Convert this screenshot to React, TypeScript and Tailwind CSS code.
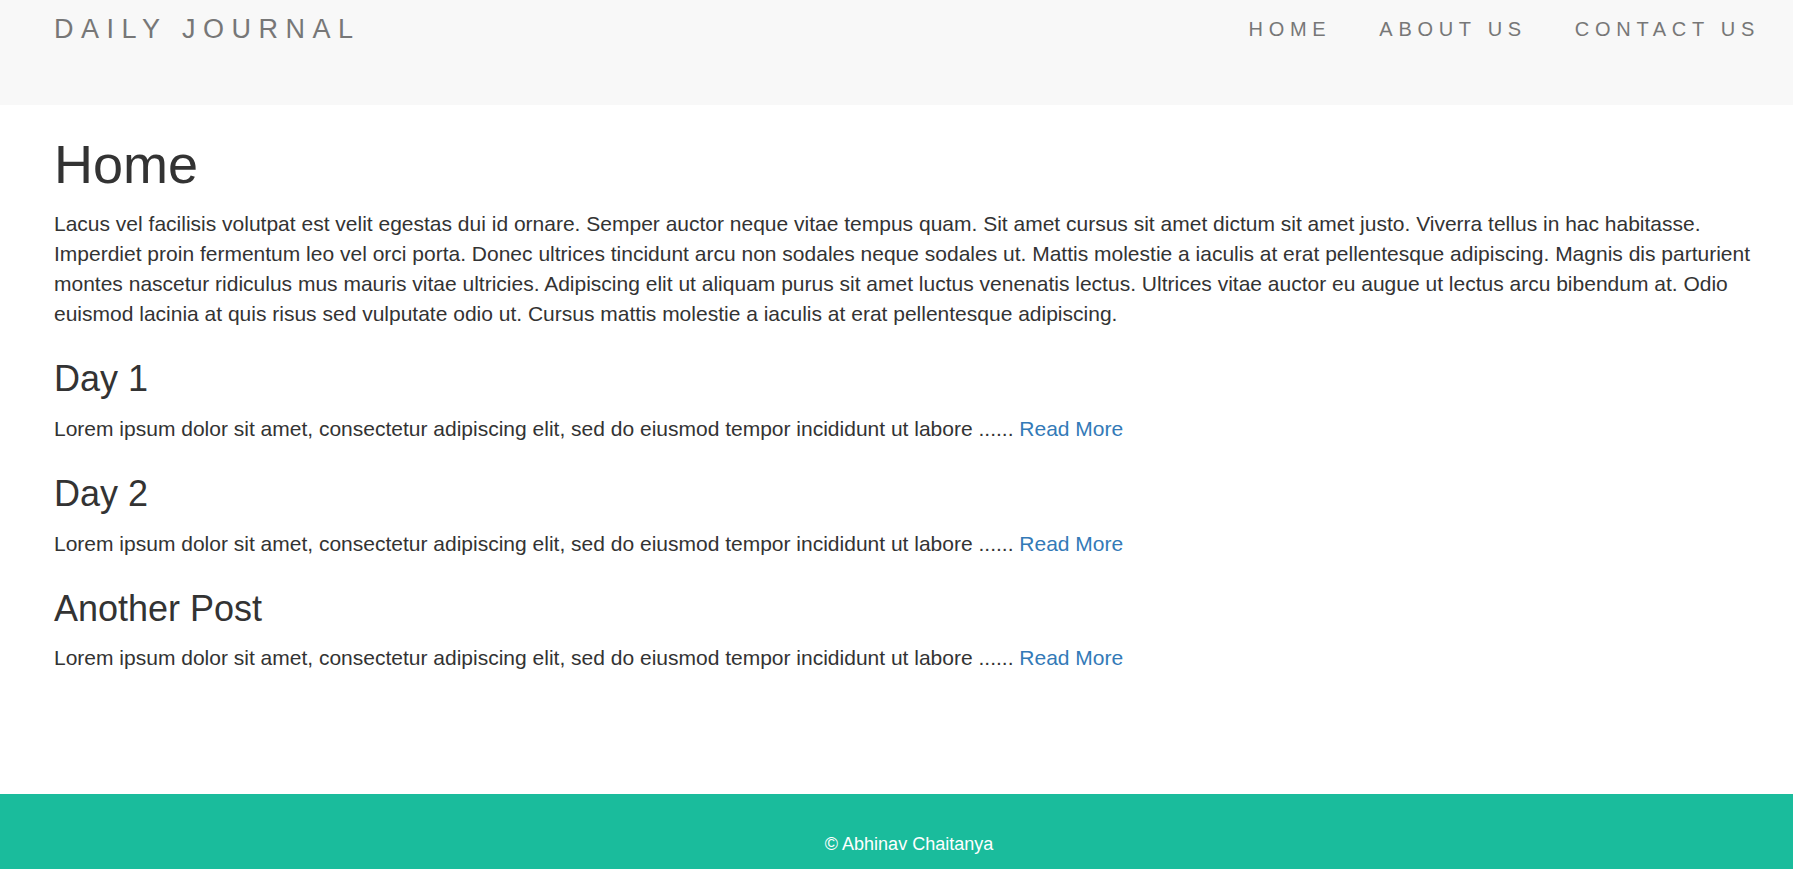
const posts = [
  { title: "Day 1" },
  { title: "Day 2" },
  { title: "Another Post" },
];

const excerpt =
  "Lorem ipsum dolor sit amet, consectetur adipiscing elit, sed do eiusmod tempor incididunt ut labore ......";

const intro =
  "Lacus vel facilisis volutpat est velit egestas dui id ornare. Semper auctor neque vitae tempus quam. Sit amet cursus sit amet dictum sit amet justo. Viverra tellus in hac habitasse. Imperdiet proin fermentum leo vel orci porta. Donec ultrices tincidunt arcu non sodales neque sodales ut. Mattis molestie a iaculis at erat pellentesque adipiscing. Magnis dis parturient montes nascetur ridiculus mus mauris vitae ultricies. Adipiscing elit ut aliquam purus sit amet luctus venenatis lectus. Ultrices vitae auctor eu augue ut lectus arcu bibendum at. Odio euismod lacinia at quis risus sed vulputate odio ut. Cursus mattis molestie a iaculis at erat pellentesque adipiscing.";

function Navbar() {
  const links = ["HOME", "ABOUT US", "CONTACT US"];
  return (
    <nav className="h-[105px] bg-[#f8f8f8] flex justify-between items-start pl-[54px] pr-[9px]">
      <a
        href="#"
        className="pt-[14px] text-[27px] leading-[30px] tracking-[7.5px] text-[#777777]"
      >
        DAILY JOURNAL
      </a>
      <ul className="flex">
        {links.map((link) => (
          <li key={link}>
            <a
              href="#"
              className="block px-[24px] pt-[14px] text-[20px] leading-[30px] tracking-[5.7px] text-[#777777]"
            >
              {link}
            </a>
          </li>
        ))}
      </ul>
    </nav>
  );
}

export default function App() {
  return (
    <div className="min-h-screen flex flex-col bg-white font-['Liberation_Sans',Arial,sans-serif] text-[#333333]">
      <Navbar />

      <main className="pl-[54px] pr-[20px]">
        <h1 className="mt-[30px] mb-[15px] text-[54px] leading-[59.4px]">Home</h1>
        <p className="text-[21px] leading-[30px] mb-[15px]">{intro}</p>

        {posts.map((post) => (
          <div key={post.title}>
            <h3 className="mt-[30px] mb-[15px] text-[36px] leading-[39.6px]">{post.title}</h3>
            <p className="text-[21px] leading-[30px] mb-[15px]">
              {excerpt}{" "}
              <a href="#" className="text-[#337ab7]">
                Read More
              </a>
            </p>
          </div>
        ))}
      </main>

      <footer className="mt-auto h-[75px] bg-[#1abc9c] pt-[37px] pl-[25px] text-center text-[18px] leading-[27px] text-white">
        <p>© Abhinav Chaitanya</p>
      </footer>
    </div>
  );
}
